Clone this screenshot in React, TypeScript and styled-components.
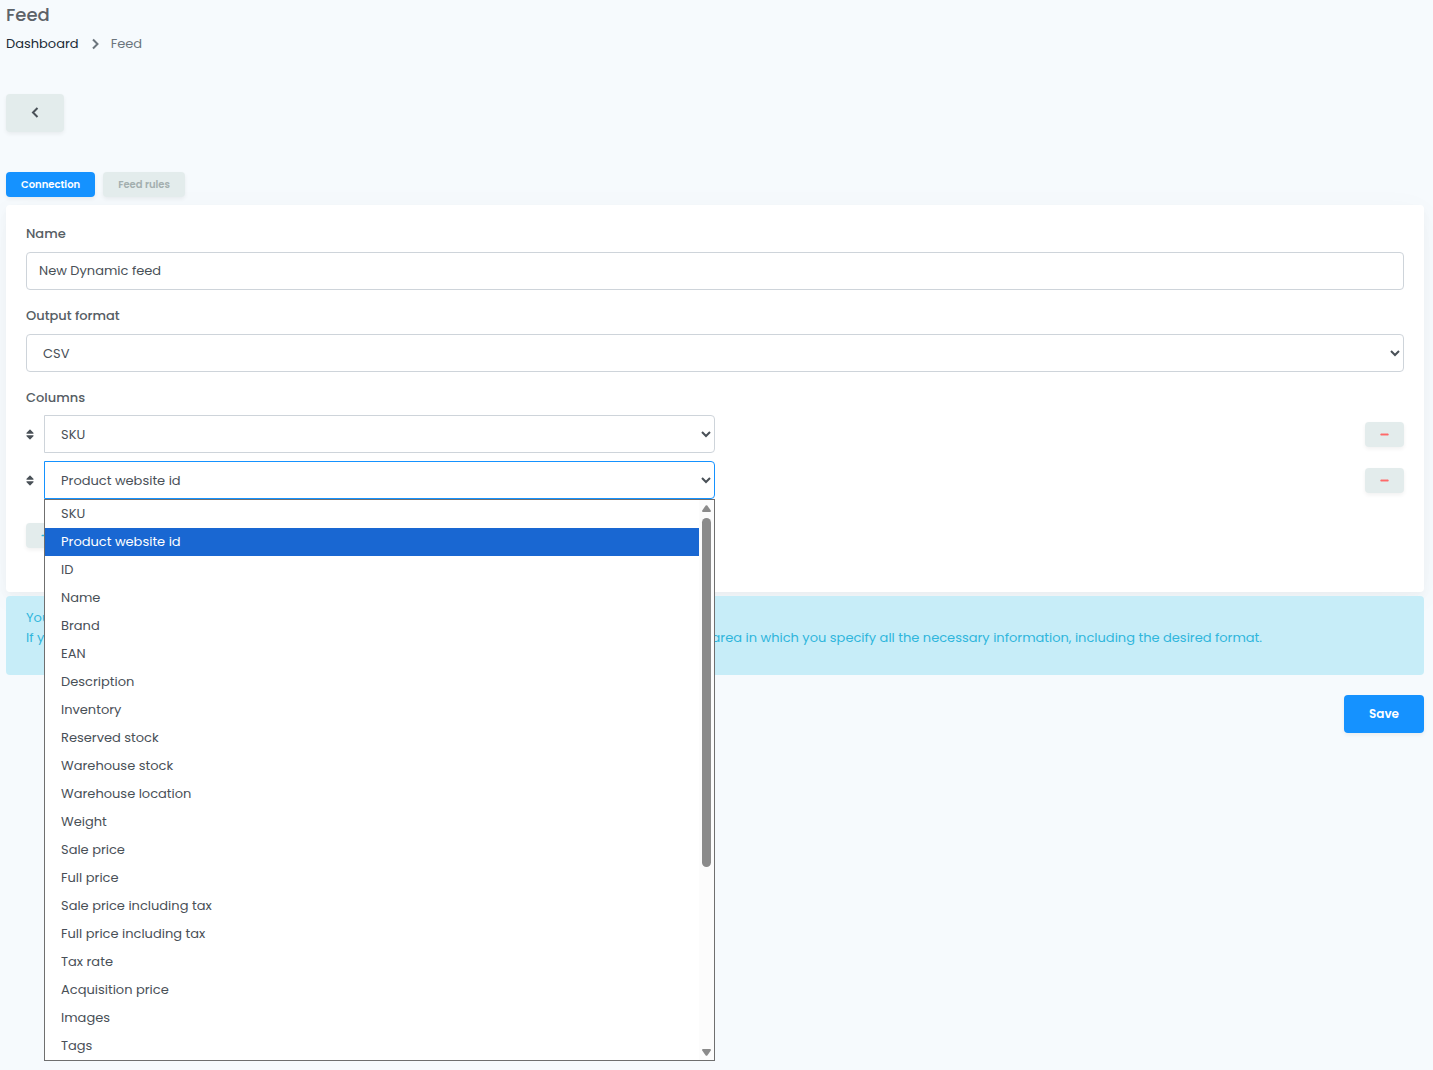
import React, { useState } from 'react';
import styled, { createGlobalStyle } from 'styled-components';
import { FaMinus, FaPlus, FaSort } from 'react-icons/fa';

const GlobalStyle = createGlobalStyle`
  *, *::before, *::after { box-sizing: border-box; }
  body {
    margin: 0;
    background: #f6fafd;
    color: #495057;
    font-family: Poppins, Inter, "Open Sans", sans-serif;
    font-size: 13px;
    line-height: 20px;
  }
  button, input, select { font: inherit; color: inherit; }
`;

const Page = styled.main`
  min-height: 100vh;
  padding: 4px 9px 8px 6px;
`;

const Title = styled.h1`
  margin: 0;
  font-size: 18px;
  line-height: 22px;
  font-weight: 500;
  color: #5d6369;
`;

const Breadcrumb = styled.nav`
  display: flex;
  align-items: center;
  gap: 12px;
  margin-top: 8px;
  color: #6c757d;
  a { color: #212b36; text-decoration: none; }
`;

const Button = styled.button<{ $tone: 'primary' | 'soft'; $size: 'small' | 'large' }>`
  display: inline-flex;
  align-items: center;
  justify-content: center;
  height: ${(p) => (p.$size === 'large' ? 38 : 25)}px;
  padding: 0 ${(p) => (p.$size === 'large' ? 25 : 15)}px;
  border: 0;
  border-radius: 4px;
  background: ${(p) => (p.$tone === 'primary' ? '#1592ff' : '#e3ecec')};
  color: ${(p) => (p.$tone === 'primary' ? '#fff' : '#a3afaf')};
  font-size: ${(p) => (p.$size === 'large' ? 12 : 10)}px;
  font-weight: 600;
  box-shadow: 0 2px 4px rgba(4, 9, 20, 0.06);
  cursor: pointer;
`;

const BackBar = styled.div`
  display: flex;
  margin: 40px 0;
  color: #495057;
`;

const Tabs = styled.div`
  display: flex;
  gap: 8px;
  margin-bottom: 8px;
`;

const Card = styled.section`
  padding: 19px 20px 44px;
  border-radius: 4px;
  background: #fff;
  box-shadow: 0 7px 35px rgba(4, 9, 20, 0.03), 0 4px 9px rgba(4, 9, 20, 0.03);
`;

const Label = styled.label`
  display: block;
  margin-bottom: 8px;
  font-weight: 500;
  color: #565d64;
`;

const Legend = styled(Label).attrs({ as: 'div' })`
  margin-bottom: 7px;
`;

const Field = styled.div`
  margin-bottom: 16px;
`;

const TextInput = styled.input`
  display: block;
  width: 100%;
  height: 38px;
  padding: 0 12px;
  border: 1px solid #ced4da;
  border-radius: 4px;
  background: #fff;
  outline: none;
`;

const Select = styled.select<{ $open?: boolean; $joined?: boolean }>`
  display: block;
  width: 100%;
  height: 38px;
  padding: 0 0 0 12px;
  border: 1px solid ${(p) => (p.$open ? '#1592ff' : '#ced4da')};
  border-radius: ${(p) => (p.$joined ? '0 4px 4px 0' : '4px')};
  background: #fff;
  outline: none;
`;

const ColumnRow = styled.div`
  display: flex;
  align-items: center;
  justify-content: space-between;
  margin-bottom: 8px;
`;

const ColumnPicker = styled.div`
  display: flex;
  align-items: center;
  gap: 10px;
  width: 50%;
`;

const SortHandle = styled(FaSort)`
  flex: none;
  width: 8px;
  height: 13px;
  color: #495057;
`;

const SelectBox = styled.div`
  position: relative;
  flex: 1;
`;

const Popup = styled.div`
  position: absolute;
  z-index: 2;
  top: 100%;
  left: 0;
  right: 0;
  display: flex;
  border: 1px solid #6f6f6f;
  background: #fff;
`;

const OptionList = styled.ul`
  flex: 1;
  margin: 0;
  padding: 0;
  list-style: none;
`;

const Option = styled.li<{ $active: boolean }>`
  padding: 4px 16px;
  background: ${(p) => (p.$active ? '#1967d2' : 'transparent')};
  color: ${(p) => (p.$active ? '#fff' : 'inherit')};
  cursor: default;
`;

const ScrollTrack = styled.div`
  display: flex;
  flex-direction: column;
  align-items: center;
  width: 15px;
  padding: 5px 0 4px;
  background: #fcfcfc;
`;

const ScrollThumb = styled.div`
  width: 9px;
  height: 349px;
  margin: 6px 0 auto;
  border-radius: 5px;
  background: #8b8b8b;
`;

const AddBar = styled.div`
  display: flex;
  padding-top: 16px;
`;

const Notice = styled.div`
  margin-top: 4px;
  padding: 12px 20px 27px;
  border-radius: 4px;
  background: #c7edf8;
  color: #30b6dc;
  p { margin: 0; }
`;

const Actions = styled.div`
  display: flex;
  justify-content: flex-end;
  margin-top: 20px;
`;

const OPTIONS = [
  'SKU', 'Product website id', 'ID', 'Name', 'Brand', 'EAN', 'Description', 'Inventory',
  'Reserved stock', 'Warehouse stock', 'Warehouse location', 'Weight', 'Sale price', 'Full price',
  'Sale price including tax', 'Full price including tax', 'Tax rate', 'Acquisition price', 'Images', 'Tags',
];

function Chevron({ direction, color }: { direction: 'left' | 'right'; color: string }) {
  return (
    <svg width="8" height="12" viewBox="0 0 8 12" fill="none" stroke={color} strokeWidth="2" aria-hidden="true">
      <path d={direction === 'left' ? 'M6.5 1 2 5.5l4.5 4.5' : 'M2 1.5 6.5 6 2 10.5'} />
    </svg>
  );
}

function ScrollArrow({ up }: { up?: boolean }) {
  return (
    <svg width="9" height="7" viewBox="0 0 9 7" fill="#8b8b8b" aria-hidden="true">
      <path d={up ? 'M3.7.6Q4.5-.3 5.3.6L8.8 5.5Q9.3 7 8 7H1Q-.3 7 .2 5.5Z' : 'M3.7 6.4Q4.5 7.3 5.3 6.4L8.8 1.5Q9.3 0 8 0H1Q-.3 0 .2 1.5Z'} />
    </svg>
  );
}

function Column({ initial, open }: { initial: string; open?: boolean }) {
  const [value, setValue] = useState(initial);
  return (
    <ColumnRow>
      <ColumnPicker>
        <SortHandle />
        <SelectBox>
          <Select $joined $open={open} aria-label="Column" value={value} onChange={(e) => setValue(e.target.value)}>
            {OPTIONS.map((name) => <option key={name}>{name}</option>)}
          </Select>
          {open && (
            <Popup>
              <OptionList role="listbox" aria-label="Column options">
                {OPTIONS.map((name) => (
                  <Option key={name} role="option" aria-selected={name === value} $active={name === value} onClick={() => setValue(name)}>
                    {name}
                  </Option>
                ))}
              </OptionList>
              <ScrollTrack>
                <ScrollArrow up />
                <ScrollThumb />
                <ScrollArrow />
              </ScrollTrack>
            </Popup>
          )}
        </SelectBox>
      </ColumnPicker>
      <Button $tone="soft" $size="small" aria-label="Remove column"><FaMinus size={9} color="#ff6b6b" stroke="#ff6b6b" strokeWidth={20} /></Button>
    </ColumnRow>
  );
}

export default function App() {
  return (
    <>
      <GlobalStyle />
      <Page>
        <Title>Feed</Title>
        <Breadcrumb aria-label="Breadcrumb">
          <a href="#dashboard">Dashboard</a>
          <Chevron direction="right" color="#6c757d" />
          <span>Feed</span>
        </Breadcrumb>
        <BackBar>
          <Button $tone="soft" $size="large" aria-label="Back"><Chevron direction="left" color="#495057" /></Button>
        </BackBar>
        <Tabs>
          <Button $tone="primary" $size="small">Connection</Button>
          <Button $tone="soft" $size="small">Feed rules</Button>
        </Tabs>
        <Card>
          <Field>
            <Label htmlFor="name">Name</Label>
            <TextInput id="name" defaultValue="New Dynamic feed" />
          </Field>
          <Field>
            <Label htmlFor="format">Output format</Label>
            <Select id="format"><option>CSV</option></Select>
          </Field>
          <Legend>Columns</Legend>
          <Column initial="SKU" />
          <Column initial="Product website id" open />
          <AddBar>
            <Button $tone="soft" $size="small" aria-label="Add column"><FaPlus size={9} color="#30b6dc" /></Button>
          </AddBar>
        </Card>
        <Notice>
          <p>You can build your own feed here.</p>
          <p>
            If you would like to have a different feed you can send us a request through the customer service
            support area in which you specify all the necessary information, including the desired format.
          </p>
        </Notice>
        <Actions>
          <Button $tone="primary" $size="large">Save</Button>
        </Actions>
      </Page>
    </>
  );
}
